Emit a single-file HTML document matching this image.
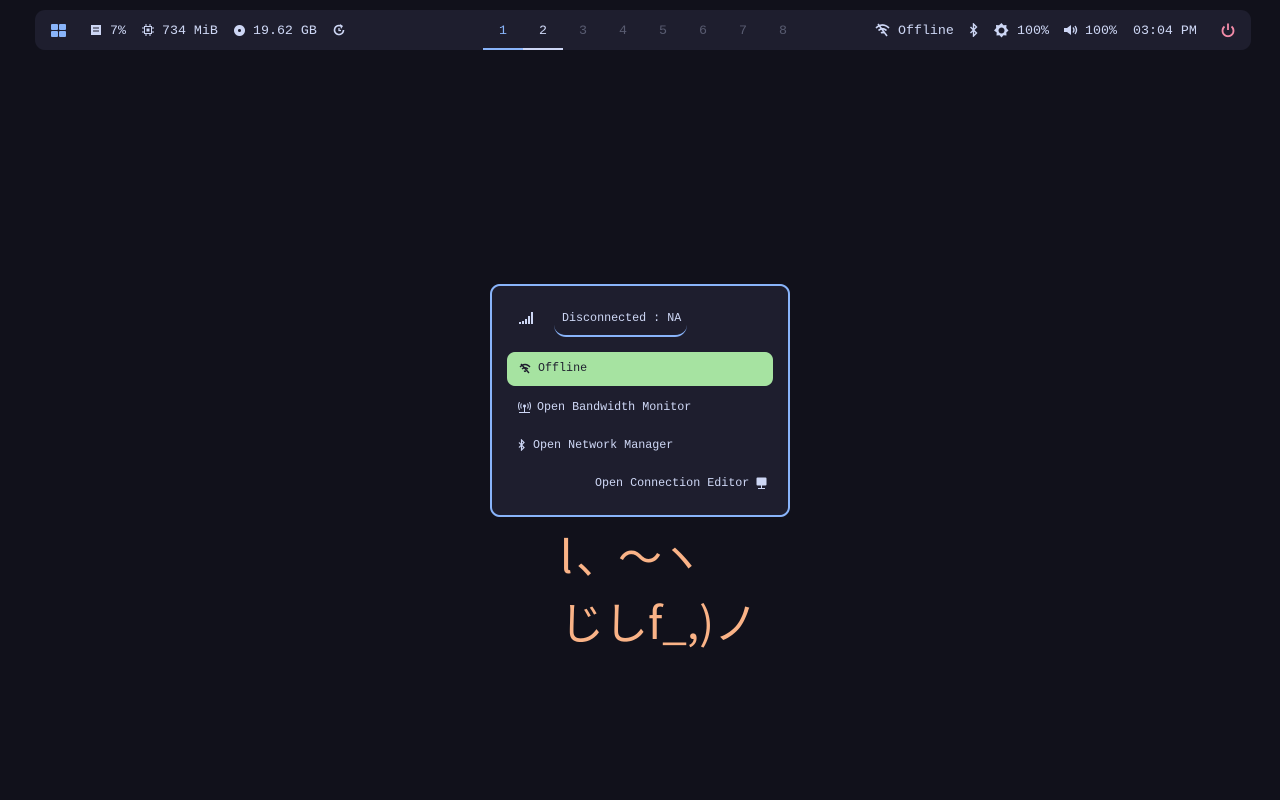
<!DOCTYPE html><html><head><meta charset="utf-8"><style>
body{margin:0;width:1280px;height:800px;background:#11111b;font-family:"Liberation Mono",monospace;color:#cdd6f4;position:relative;overflow:hidden}
.bar{position:absolute;left:35px;top:10px;width:1216px;height:40px;background:#1e1e2e;border-radius:10px}
.t{position:absolute;font-size:13.3px;line-height:40px;top:11px;white-space:pre}
.ws{position:absolute;top:10px;width:40px;height:40px;line-height:41px;text-align:center;font-size:13.3px;color:#585b70}
.pop{position:absolute;left:490px;top:284px;width:296px;height:229px;border:2px solid #89b4fa;border-radius:10px;background:#1e1e2e}
.p{position:absolute;font-size:11.7px;white-space:pre;color:#cdd6f4}
.jp{position:absolute;left:560px;font-family:"Noto Sans CJK JP",sans-serif;font-size:44px;color:#fab387;white-space:pre;line-height:1}
</style></head><body>
<div class="bar"></div>
<svg style="position:absolute;left:51px;top:24px" width="15" height="13"><rect x="0" y="0" width="7" height="6" rx="1" fill="#89b4fa"/><rect x="8" y="0" width="7" height="6" rx="1" fill="#89b4fa"/><rect x="0" y="7" width="7" height="6" rx="1" fill="#89b4fa"/><rect x="8" y="7" width="7" height="6" rx="1" fill="#89b4fa"/></svg>
<svg style="position:absolute;left:90px;top:24px" width="12" height="12"><rect x="1" y="1" width="10" height="10" fill="#cdd6f4"/><g stroke="#1e1e2e"><line x1="3" y1="4" x2="9" y2="4"/><line x1="3" y1="7" x2="9" y2="7"/></g></svg>
<div class="t" style="left:110px">7%</div>
<svg style="position:absolute;left:142px;top:24px" width="12" height="12"><rect x="2.5" y="2.5" width="7" height="7" fill="none" stroke="#cdd6f4"/><rect x="4.5" y="4.5" width="3" height="3" fill="#cdd6f4"/><g stroke="#cdd6f4"><line x1="4" y1="0" x2="4" y2="2"/><line x1="8" y1="0" x2="8" y2="2"/><line x1="4" y1="10" x2="4" y2="12"/><line x1="8" y1="10" x2="8" y2="12"/><line x1="0" y1="4" x2="2" y2="4"/><line x1="0" y1="8" x2="2" y2="8"/><line x1="10" y1="4" x2="12" y2="4"/><line x1="10" y1="8" x2="12" y2="8"/></g></svg>
<div class="t" style="left:162px">734 MiB</div>
<svg style="position:absolute;left:234px;top:25px" width="11" height="11"><circle cx="5.5" cy="5.5" r="5.5" fill="#cdd6f4"/><circle cx="5.5" cy="5.5" r="1.5" fill="#1e1e2e"/></svg>
<div class="t" style="left:253px">19.62 GB</div>
<svg style="position:absolute;left:332px;top:23px" width="14" height="14"><path d="M11.5 7A4.5 4.5 0 1 1 9 3" fill="none" stroke="#cdd6f4" stroke-width="1.6"/><path d="M8 1l3 2-2 3z" fill="#cdd6f4"/><path d="M7 5v2.5h2" fill="none" stroke="#cdd6f4" stroke-width="1.3"/></svg>
<div class="ws" style="left:483px;color:#89b4fa;border-bottom:2px solid #89b4fa;height:38px">1</div>
<div class="ws" style="left:523px;color:#cdd6f4;border-bottom:2px solid #cdd6f4;height:38px">2</div>
<div class="ws" style="left:563px">3</div><div class="ws" style="left:603px">4</div><div class="ws" style="left:643px">5</div><div class="ws" style="left:683px">6</div><div class="ws" style="left:723px">7</div><div class="ws" style="left:763px">8</div>
<svg style="position:absolute;left:875px;top:23px" width="15" height="14"><path d="M1 5Q7.5-1 14 5M3.5 7.5Q7.5 4 11.5 7.5M6 10Q7.5 9 9 10" fill="none" stroke="#cdd6f4" stroke-width="1.6"/><line x1="3" y1="1" x2="12" y2="13" stroke="#cdd6f4" stroke-width="1.6"/></svg>
<div class="t" style="left:898px">Offline</div>
<svg style="position:absolute;left:969px;top:23px" width="10" height="14"><path d="M1.5 4l6 6-3 3V1l3 3-6 6" fill="none" stroke="#cdd6f4" stroke-width="1.4"/></svg>
<svg style="position:absolute;left:994px;top:23px" width="15" height="15"><path d="M7.5 0l2 2.2 3-.2-.2 3 2.2 2.5-2.2 2 .2 3-3-.2-2 2.2-2-2.2-3 .2.2-3L0 7.5l2.2-2.5-.2-3 3 .2z" fill="#cdd6f4"/><circle cx="7.5" cy="7.5" r="3" fill="#1e1e2e"/></svg>
<div class="t" style="left:1017px">100%</div>
<svg style="position:absolute;left:1064px;top:24px" width="14" height="12"><path d="M0 4h3l4-3v10l-4-3H0z" fill="#cdd6f4"/><path d="M9 3.5Q11 6 9 8.5M11 2Q14 6 11 10" fill="none" stroke="#cdd6f4" stroke-width="1.4"/></svg>
<div class="t" style="left:1085px">100%</div>
<div class="t" style="left:1133px">03:04 PM</div>
<svg style="position:absolute;left:1220px;top:22px" width="16" height="16"><path d="M4.5 4.5A5.5 5.5 0 1 0 11.5 4.5" fill="none" stroke="#f38ba8" stroke-width="1.8"/><line x1="8" y1="1.5" x2="8" y2="8" stroke="#f38ba8" stroke-width="1.8"/></svg>

<div class="pop"></div>
<svg style="position:absolute;left:519px;top:312px" width="14" height="12"><rect x="0" y="10" width="2" height="2" fill="#cdd6f4"/><rect x="3" y="9" width="2" height="3" fill="#cdd6f4"/><rect x="6" y="7" width="2" height="5" fill="#cdd6f4"/><rect x="9" y="4" width="2" height="8" fill="#cdd6f4"/><rect x="12" y="0" width="2" height="12" fill="#cdd6f4"/></svg>
<div style="position:absolute;left:554px;top:306px;width:133px;height:29px;border-bottom:2px solid #89b4fa;border-radius:0 0 12px 12px"></div>
<div class="p" style="left:562px;top:311px">Disconnected : NA</div>
<div style="position:absolute;left:507px;top:352px;width:266px;height:34px;background:#a6e3a1;border-radius:8px"></div>
<svg style="position:absolute;left:519px;top:363px" width="12" height="11"><path d="M1 4Q6-1 11 4M3 6Q6 3.5 9 6M5 8.5Q6 7.8 7 8.5" fill="none" stroke="#1e1e2e" stroke-width="1.4"/><line x1="2" y1="1" x2="10" y2="10" stroke="#1e1e2e" stroke-width="1.4"/></svg>
<div class="p" style="left:538px;top:361px;color:#1e1e2e">Offline</div>
<svg style="position:absolute;left:518px;top:402px" width="13" height="11"><circle cx="6.5" cy="4" r="1.5" fill="#cdd6f4"/><path d="M3.5 1.5Q2 4 3.5 6.5M9.5 1.5Q11 4 9.5 6.5M1.5 0Q-0.5 4 1.5 8M11.5 0Q13.5 4 11.5 8" fill="none" stroke="#cdd6f4" stroke-width="1"/><line x1="6.5" y1="5" x2="6.5" y2="10" stroke="#cdd6f4"/><line x1="1" y1="10.5" x2="12" y2="10.5" stroke="#cdd6f4"/></svg>
<div class="p" style="left:537px;top:400px">Open Bandwidth Monitor</div>
<svg style="position:absolute;left:518px;top:439px" width="8" height="12"><path d="M1 3.5l5 5-2.5 2.5V1l2.5 2.5-5 5" fill="none" stroke="#cdd6f4" stroke-width="1.2"/></svg>
<div class="p" style="left:533px;top:438px">Open Network Manager</div>
<div class="p" style="left:595px;top:476px">Open Connection Editor</div>
<svg style="position:absolute;left:756px;top:477px" width="11" height="12"><rect x="0.5" y="0.5" width="10" height="8" rx="1" fill="#cdd6f4"/><line x1="5.5" y1="8" x2="5.5" y2="11" stroke="#cdd6f4"/><line x1="2" y1="11.5" x2="9" y2="11.5" stroke="#cdd6f4"/></svg>

<div class="jp" style="top:532px;left:560px">l</div>
<div class="jp" style="top:532px;left:576px">、</div>
<div class="jp" style="top:532px;left:618px">～</div>
<div class="jp" style="top:532px;left:659px">ヽ</div>
<div class="jp" style="top:598px">じしf_,)ノ</div>
</body></html>
